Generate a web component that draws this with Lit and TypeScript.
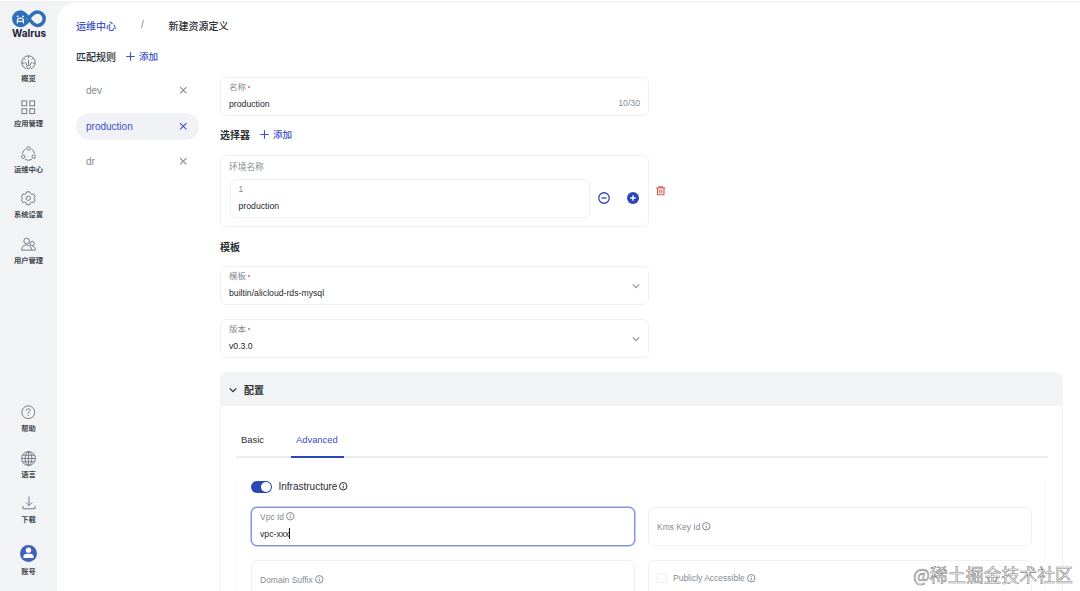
import { LitElement, html, css, svg, nothing } from "lit";
import { customElement, property } from "lit/decorators.js";
import { classMap } from "lit/directives/class-map.js";

// Glyphs share a 16x16 grid.
const icons: Record<string, any> = {
  gauge: svg`<path d="M5.300 14.700A7.200 7.200 0 1 1 10.700 14.700"/><circle cx="8" cy="12.800" r="1.900"/><path d="M8 10.900V5M8 1v2.300M3.200 3.400l1.600 1.700M12.800 3.400l-1.600 1.700M1 8.600h2.600M15 8.600h-2.600M4.900 7.500l1.200 3.400M11.100 7.500 9.900 10.900"/>`,
  apps: svg`<rect x="1" y="1" width="5.300" height="5.300"/><rect x="9.700" y="1" width="5.300" height="5.300"/><rect x="1" y="9.700" width="5.300" height="5.300"/><rect x="9.700" y="9.700" width="5.300" height="5.300"/>`,
  ops: svg`<circle cx="8" cy="2.600" r="1.800"/><circle cx="2.400" cy="11.400" r="1.800"/><circle cx="13.600" cy="11.400" r="1.800"/><path d="M5 3.200A6.600 6.600 0 0 0 1.500 8.200M11 3.200a6.600 6.600 0 0 1 3.500 5M4.400 14.200a6.600 6.600 0 0 0 7.200 0"/>`,
  gear: svg`<circle cx="8" cy="8" r="2.400"/><path d="M6.200.9h3.600l.6 2 1.500.9 2.100-.5 1.600 2.900L14.200 8l1.400 1.800-1.600 2.900-2.100-.5-1.500.9-.6 2H6.200l-.6-2-1.500-.9-2.100.5L.4 9.800 1.800 8 .4 6.200 2 3.300l2.100.5 1.500-.9z" stroke-linejoin="round"/>`,
  users: svg`<circle cx="6" cy="4.200" r="3"/><path d="M.7 14c0-3.500 2-5.600 5.300-5.600 3.200 0 5.200 2.100 5.200 5.600zM11.200 14h4.100c0-2.600-1-4.300-3.300-4.300"/><circle cx="11.900" cy="6.900" r="2.200"/>`,
  help: svg`<circle cx="8" cy="8" r="7.100"/><path d="M5.900 6.300c0-1.300.9-2.100 2.100-2.100s2.100.8 2.100 1.900c0 1.600-2.100 1.700-2.100 3.500M8 10.900v1.300"/>`,
  globe: svg`<circle cx="8" cy="8" r="7.400"/><ellipse cx="8" cy="8" rx="3.600" ry="7.400"/><path d="M8 .6v14.800M.6 8h14.800M1.500 4.500h13M1.500 11.500h13"/>`,
  download: svg`<path d="M8 .6v10.200M4.300 7.200 8 10.900l3.700-3.700M1.100 11.400v3.200h13.800v-3.200"/>`,
  close: svg`<path d="M2 2l12 12M14 2 2 14"/>`,
  plus: svg`<path d="M8 .5v15M.5 8h15"/>`,
  chevron: svg`<path d="M1.500 4.700 8 11.200l6.500-6.500"/>`,
  info: svg`<circle cx="8" cy="8" r="7"/><path d="M8 7v5M8 4v1.600"/>`,
  minus: svg`<circle cx="8" cy="8" r="7"/><path d="M4.600 8h6.800"/>`,
  add: svg`<circle cx="8" cy="8" r="8" fill="currentColor" stroke="none"/><path d="M8 4.400v7.200M4.400 8h7.200" stroke="#fff"/>`,
  trash: svg`<path d="M.3 3.400h15.400M5 3.300V1.200h6v2.100M2.600 3.800v11h10.800v-11M6.300 6.500v5.600M9.700 6.500v5.600"/>`,
  account: svg`<circle cx="8" cy="8" r="8" fill="#3f62bb" stroke="none"/><circle cx="8" cy="4.900" r="2.500" fill="#fff" stroke="none"/><path d="M3.200 12.200V11c0-1.900 1.600-2.700 3-2.700h3.600c1.400 0 3 .8 3 2.700v1.200z" fill="#fff" stroke="none"/>`,
};

const icon = (name: string, size: number, weight = 1) => svg`
  <svg class="icon" viewBox="0 0 16 16" width=${size} height=${size} fill="none"
    stroke="currentColor" stroke-width=${(weight * 16) / size}>${icons[name]}</svg>`;

const base = css`
  * { box-sizing: border-box; }
  .icon { display: block; flex: none; overflow: visible; }
`;

@customElement("side-bar")
class SideBar extends LitElement {
  static styles = [base, css`
    :host { display: flex; flex-direction: column; width: 57px; flex: none; color: #757d86; align-items: center; }
    .logo { margin-top: 7px; width: 36px; height: 29px; overflow: visible; display: block; }
    .brand { font: 700 9.800px/12px Inter, sans-serif; fill: #1d2140; }
    .nav { display: flex; flex-direction: column; gap: 16.600px; margin-top: 15.600px; }
    .bottom { margin-top: auto; margin-bottom: 14px; }
    .item { display: flex; flex-direction: column; align-items: center; height: 29px; justify-content: space-between; }
    .item.account { margin-top: 3px; height: 32px; }
    .text { font-size: 7.300px; line-height: 11px; font-weight: 700; color: #42474d; white-space: nowrap; }
  `];
  item(name: string, label: string, size = 15) {
    return html`<div class=${classMap({ item: true, account: name === "account" })}>
      ${icon(name, size, 1)}<span class="text">${label}</span></div>`;
  }
  render() {
    return html`
      <svg class="logo" viewBox="0 0 36 29">
        <path d="M18 9.800C14.500 14 12.500 15.600 9.600 15.600a6.800 6.800 0 0 1 0-13.600c3.300 0 5.400 2.500 8.400 6.800s5.100 6.800 8.400 6.800a6.800 6.800 0 0 0 0-13.600c-2.800 0-5 1.800-7.700 5.200" fill="none" stroke="#2e6fb8" stroke-width="3.500"/>
        <path d="M3 8a6 6 0 0 1 12-1l1 3-4 5H6z" fill="#2e6fb8"/>
        <path d="M6.400 13.600V9.500q3-2.600 6 0v4.100M6.500 11.400h5.800" stroke="#eef4fa" stroke-width="1.200" fill="none"/>
        <circle cx="6.600" cy="6.400" r=".9" fill="#fff"/><circle cx="12" cy="6.400" r=".9" fill="#fff"/>
        <text class="brand" x="18" y="27.400" text-anchor="middle" textLength="34" lengthAdjust="spacingAndGlyphs">Walrus</text>
      </svg>
      <div class="nav">
        ${this.item("gauge", "概览")}${this.item("apps", "应用管理", 14.5)}${this.item("ops", "运维中心")}
        ${this.item("gear", "系统设置", 14.5)}${this.item("users", "用户管理")}
      </div>
      <div class="nav bottom">
        ${this.item("help", "帮助", 14.5)}${this.item("globe", "语言")}${this.item("download", "下载", 14)}
        ${this.item("account", "账号", 17)}
      </div>`;
  }
}

@customElement("form-field")
class FormField extends LitElement {
  @property() label = "";
  @property() value = "";
  @property() count = "";
  @property({ type: Boolean }) required = false;
  @property({ type: Boolean }) info = false;
  @property({ type: Boolean }) select = false;
  @property({ type: Boolean }) check = false;
  @property({ type: Boolean, reflect: true }) focused = false;
  static styles = [base, css`
    :host { display: flex; align-items: center; height: 39px; border: 1px solid #f0f1f3; border-radius: 6px; background: #fff; padding: 0 8px; box-sizing: border-box; min-width: 0; }
    :host([focused]) { border-color: #8594dc; box-shadow: 0 0 0 .5px #8594dc; }
    .body { flex: 1; display: flex; flex-direction: column; gap: 5px; }
    .body.filled { padding-bottom: 3px; }
    .body.check { padding-bottom: 3px; }
    .label { display: flex; align-items: center; gap: 2px; font-size: 8.500px; line-height: 12px; color: #858b92; }
    .star { width: 2px; height: 2px; border-radius: 50%; background: #ef5b74; }
    .value { display: flex; font-size: 8.700px; line-height: 12px; color: #24282d; }
    .caret { width: 1px; height: 11px; background: #111; }
    .count { align-self: flex-end; font-size: 8.700px; line-height: 12px; margin-bottom: 6px; color: #858b92; }
    .arrow { color: #9298a0; }
    .box { width: 10px; height: 10px; border: 1px solid #eceef0; border-radius: 2px; margin-right: 4px; }
  `];
  render() {
    return html`
      <div class=${classMap({ body: true, filled: !!this.value, check: this.check })}>
        <div class="label">${this.check ? html`<span class="box"></span>` : nothing}${this.label}
          ${this.required ? html`<span class="star"></span>` : nothing}
          ${this.info ? icon("info", 8.5, 1) : nothing}</div>
        ${this.value ? html`<div class="value">${this.value}${this.focused ? html`<span class="caret"></span>` : nothing}</div>` : nothing}
      </div>
      ${this.count ? html`<span class="count">${this.count}</span>` : nothing}
      ${this.select ? html`<span class="arrow">${icon("chevron", 8, 1.2)}</span>` : nothing}`;
  }
}

@customElement("app-root")
class AppRoot extends LitElement {
  static styles = [base, css`
    :host { display: flex; width: 1080px; height: 591px; overflow: hidden; position: relative; padding-top: 3px; box-sizing: border-box;
      font-family: "Liberation Sans", "Noto Sans CJK SC", sans-serif; background: linear-gradient(#fff 1px, #f1f3f5 1px); color: #2a2e33; }
    .main { flex: 1; background: #fff; border-top-left-radius: 18px; padding: 12px 17px 0 19px; min-width: 0; }
    .crumbs { display: flex; align-items: center; height: 20px; font-size: 10px; font-weight: 500; }
    .link { color: #3a50c6; }
    .slash { color: #7d838a; margin: -2px 25px 0; width: 2.500px; }
    .heading { display: flex; align-items: center; font-size: 10px; font-weight: 500; height: 20px; gap: 10px; }
    .rules { margin-top: 11px; }
    .bold { font-weight: 700; }
    .add { display: flex; align-items: center; gap: 4px; color: #3a50c6; font-weight: 500; font-size: 9.600px; }
    .content { display: flex; margin-top: 11px; }
    .list { display: flex; flex-direction: column; gap: 8.600px; width: 123px; flex: none; margin-right: 21px; }
    .rule { display: flex; align-items: center; justify-content: space-between; height: 27px; border-radius: 14px; padding: 0 12px 0 10px; font-size: 10px; color: #858b92; }
    .rule.on { background: #f1f2f5; color: #3a50c6; }
    .form { flex: 1; min-width: 0; }
    .narrow { width: 429px; }
    .selector { margin-top: 8px; }
    .env { display: flex; align-items: center; margin-top: 11px; }
    .group { border: 1px solid #f0f1f3; border-radius: 6px; height: 72px; padding: 4px 9px 0 8px; }
    .caption { font-size: 8.700px; line-height: 14px; color: #858b92; }
    .line { display: flex; align-items: center; margin-top: 5px; color: #2c46b5; }
    .grow { flex: 1; padding-left: 7.500px; margin-left: 1px; }
    .acts { display: flex; gap: 17px; margin: 0 0 2px 8px; }
    .trash { color: #d9564c; margin: 0 0 0 7px; }
    .template { margin: 9px 0 10px; }
    .version { margin-top: 14px; }
    .panel { margin-top: 14px; border: 1px solid #f1f2f4; border-radius: 7px 7px 0 0; height: 260px; }
    .head { display: flex; align-items: center; gap: 7px; height: 33px; padding-left: 8px; background: #f1f3f5; font-size: 10px; font-weight: 700; border-radius: 6px 6px 0 0; }
    .tabs { display: flex; margin: 20px 14px 0 15px; border-bottom: 2px solid #ebecef; height: 32px; font-size: 9.400px; line-height: 27px; }
    .tab { padding: 0 5px; height: 32px; width: 52px; margin-right: 3px; }
    .tab.on { color: #3a50c6; border-bottom: 2px solid #2c46b5; width: 53px; }
    .card { margin: 17px 16px 0 15px; border: 1px solid #fafafb; border-top: 0; border-radius: 6px; padding: 4px 13px 0 14px; height: 140px; }
    .toggle { display: flex; align-items: center; height: 15px; font-size: 10px; gap: 2px; }
    .switch { display: flex; justify-content: flex-end; width: 20.500px; height: 12px; border-radius: 6px; padding: 1px; background: #2c46b5; margin: 1px 5px 0 0; }
    .knob { width: 10px; height: 10px; border-radius: 50%; background: #fff; }
    .grid { display: grid; grid-template-columns: 1fr 1fr; gap: 14px 13px; margin-top: 13px; }
    .mark { position: absolute; right: 7px; bottom: 6px; font: 400 17.900px/22px "Noto Sans CJK SC", sans-serif; color: #fff; -webkit-text-stroke: .6px #848484; white-space: nowrap; }
  `];
  rule(name: string, on = false) {
    return html`<div class=${classMap({ rule: true, on })}>${name}${icon("close", 8.5, 1.1)}</div>`;
  }
  add() {
    return html`<span class="add">${icon("plus", 9, 1.1)}添加</span>`;
  }
  render() {
    return html`
      <side-bar></side-bar>
      <div class="main">
        <div class="crumbs"><span class="link">运维中心</span><span class="slash">/</span><span>新建资源定义</span></div>
        <div class="heading rules">匹配规则${this.add()}</div>
        <div class="content">
          <div class="list">${this.rule("dev")}${this.rule("production", true)}${this.rule("dr")}</div>
          <div class="form">
            <form-field class="narrow" label="名称" value="production" count="10/30" required></form-field>
            <div class="heading selector bold">选择器${this.add()}</div>
            <div class="env">
              <div class="group narrow">
                <div class="caption">环境名称</div>
                <div class="line">
                  <form-field class="grow" label="1" value="production"></form-field>
                  <span class="acts">${icon("minus", 12, 1.3)}${icon("add", 12, 1.3)}</span>
                </div>
              </div>
              <span class="trash">${icon("trash", 9.5, 1.1)}</span>
            </div>
            <div class="heading template bold">模板</div>
            <form-field class="narrow" label="模板" value="builtin/alicloud-rds-mysql" required select></form-field>
            <form-field class="narrow version" label="版本" value="v0.3.0" required select></form-field>
            <div class="panel">
              <div class="head">${icon("chevron", 8, 1.2)}配置</div>
              <div class="tabs"><span class="tab">Basic</span><span class="tab on">Advanced</span></div>
              <div class="card">
                <div class="toggle"><span class="switch"><span class="knob"></span></span>Infrastructure${icon("info", 8.5, 1)}</div>
                <div class="grid">
                  <form-field label="Vpc Id" value="vpc-xxx" info focused></form-field>
                  <form-field label="Kms Key Id" info></form-field>
                  <form-field label="Domain Suffix" info></form-field>
                  <form-field label="Publicly Accessible" info check></form-field>
                </div>
              </div>
            </div>
          </div>
        </div>
      </div>
      <div class="mark">@稀土掘金技术社区</div>`;
  }
}
